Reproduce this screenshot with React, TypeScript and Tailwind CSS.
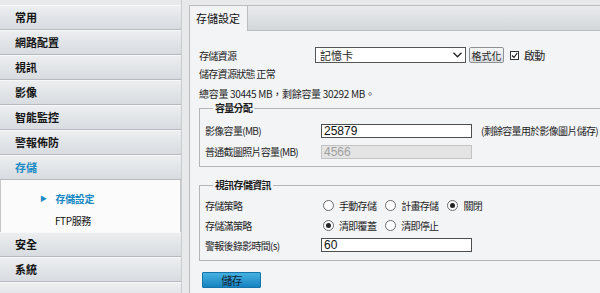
import React from "react";

const menu = ["常用", "網路配置", "視訊", "影像", "智能監控", "警報佈防"];
const menuAfter = ["安全", "系統"];

const font = { fontFamily: '"Noto Sans CJK TC", "Noto Sans CJK SC", sans-serif' };

const MenuItem = ({ label, active }: { label: string; active?: boolean }) => (
    <div
        className={
            "flex h-[25px] items-center border-t border-t-[#f7f8f9] border-b border-b-[#b7bbbf] bg-gradient-to-b from-[#eceef0] to-[#d8dce0] pl-[15px] text-[11px] font-bold " +
            (active ? "text-[#1b8ac4]" : "text-[#151515]")
        }
    >
        {label}
    </div>
);

const Radio = ({ checked }: { checked?: boolean }) => (
    <span className="flex h-[11px] w-[11px] items-center justify-center rounded-full border border-[#6b6b6b] bg-white">
        {checked && <span className="h-[5px] w-[5px] rounded-full bg-[#222]" />}
    </span>
);

const RadioOpt = ({ label, checked }: { label: string; checked?: boolean }) => (
    <div className="mr-[9px] flex items-center gap-[5px]">
        <Radio checked={checked} />
        <span>{label}</span>
    </div>
);

const Row = ({ label, children, h }: { label: string; children?: React.ReactNode; h: string }) => (
    <div className={"flex items-center " + h}>
        <div className="w-[116px] shrink-0">{label}</div>
        {children}
    </div>
);

const TextBox = ({ value, disabled }: { value: string; disabled?: boolean }) => (
    <div
        className={
            "flex h-[14px] w-[151px] items-center border px-[2px] text-[12px] tracking-normal font-['Liberation_Sans'] " +
            (disabled ? "border-[#c2c2c2] bg-[#e4e4e4] text-[#a0a0a0]" : "border-[#4e4e4e] bg-white text-[#111]")
        }
    >
        {value}
    </div>
);

export default function App() {
    return (
        <div className="flex h-[293px] w-[600px] overflow-hidden bg-[#e7e9eb]" style={font}>
            {/* sidebar */}
            <div className="w-[182px] shrink-0 border-r border-r-[#c9cccf] pt-[5px]">
                {menu.map((m) => (
                    <MenuItem key={m} label={m} />
                ))}
                <MenuItem label="存儲" active />
                <div className="flex h-[52px] flex-col border-x border-[#c5c8cb] bg-[#fbfbfb] pt-[7px] text-[10px] tracking-[-0.4px]">
                    <div className="flex h-[22px] items-center pl-[39px] font-bold text-[#1b8ac4]">
                        <span className="mr-[9px] text-[7px]">▶</span>
                        存儲設定
                    </div>
                    <div className="flex h-[22px] items-center pl-[54px] text-[#111]">FTP服務</div>
                </div>
                {menuAfter.map((m) => (
                    <MenuItem key={m} label={m} />
                ))}
                <div className="h-[25px] border-t border-t-[#f7f8f9] bg-gradient-to-b from-[#eceef0] to-[#d8dce0]" />
            </div>

            {/* content */}
            <div className="ml-[7px] mt-[5px] flex min-w-0 flex-1 flex-col border-l border-t border-[#b9bdc1] bg-[#f3f4f6]">
                <div className="flex h-[25px] shrink-0">
                    <div className="flex w-[58px] items-center border-r border-[#b9bdc1] bg-[#f3f4f6] pl-[6px] text-[11px] text-[#111]">
                        存儲設定
                    </div>
                    <div className="flex-1 border-b border-[#b9bdc1] bg-gradient-to-b from-[#e9ebed] to-[#d3d7da]" />
                </div>

                <div className="pl-[9px] pt-[16px] text-[10px] tracking-[-0.7px] text-[#1e1e1e]">
                    <Row label="存儲資源" h="h-[16px]">
                        <div className="flex h-[16px] w-[151px] items-center justify-between border border-[#555] bg-white pl-[4px] pr-[3px] text-[11px] tracking-normal">
                            <span>記憶卡</span>
                            <svg width="9" height="6" viewBox="0 0 9 6">
                                <path d="M0.5 0.8 L4.5 4.8 L8.5 0.8" fill="none" stroke="#222" strokeWidth="1.3" />
                            </svg>
                        </div>
                        <div className="ml-[3px] flex h-[16px] w-[35px] items-center justify-center rounded-[2px] border border-[#8d9195] bg-gradient-to-b from-[#f6f7f8] to-[#d9dcdf] text-[10px] tracking-normal">
                            格式化
                        </div>
                        <span className="ml-[6px] flex h-[9px] w-[9px] items-center justify-center border border-[#333] bg-white">
                            <svg width="7" height="7" viewBox="0 0 7 7">
                                <path d="M1 3.5 L3 5.5 L6.2 1" fill="none" stroke="#111" strokeWidth="1.1" />
                            </svg>
                        </span>
                        <span className="ml-[5px] text-[11px]">啟動</span>
                    </Row>
                    <div className="flex h-[21px] items-center">儲存資源狀態 正常</div>
                    <div className="flex h-[18px] items-center tracking-[-0.3px]">總容量 30445 MB，剩餘容量 30292 MB。</div>

                    <fieldset className="w-[430px] border border-[#b3b6b9] pb-[4px] pl-[5px]">
                        <legend className="ml-[8px] px-[2px] text-[10px] font-bold leading-[12px]">容量分配</legend>
                        <div className="pt-[6px]">
                            <Row label="影像容量(MB)" h="h-[21px]">
                                <TextBox value="25879" />
                                <span className="ml-[9px]">(剩餘容量用於影像圖片儲存)</span>
                            </Row>
                            <Row label="普通截圖照片容量(MB)" h="h-[21px]">
                                <TextBox value="4566" disabled />
                            </Row>
                        </div>
                    </fieldset>

                    <fieldset className="mt-[12px] w-[430px] border border-[#b3b6b9] pb-[5px] pl-[5px]">
                        <legend className="ml-[8px] px-[2px] text-[10px] font-bold leading-[12px]">視訊存儲資訊</legend>
                        <div className="pt-[4px]">
                            <Row label="存儲策略" h="h-[20px]">
                                <div className="flex items-center pl-[2px] text-[10px]">
                                    <RadioOpt label="手動存儲" />
                                    <RadioOpt label="計畫存儲" />
                                    <RadioOpt label="關閉" checked />
                                </div>
                            </Row>
                            <Row label="存儲滿策略" h="h-[20px]">
                                <div className="flex items-center pl-[2px] text-[10px]">
                                    <RadioOpt label="清即覆蓋" checked />
                                    <RadioOpt label="清即停止" />
                                </div>
                            </Row>
                            <Row label="警報後錄影時間(s)" h="h-[20px]">
                                <TextBox value="60" />
                            </Row>
                        </div>
                    </fieldset>

                    <div className="mt-[11px] ml-[3px] flex h-[16px] w-[59px] items-center justify-center rounded-[1px] border border-[#1473a8] bg-gradient-to-b from-[#45b1e0] to-[#1583c0] text-[11px] text-[#10263a]">
                        儲存
                    </div>
                </div>
            </div>
        </div>
    );
}
